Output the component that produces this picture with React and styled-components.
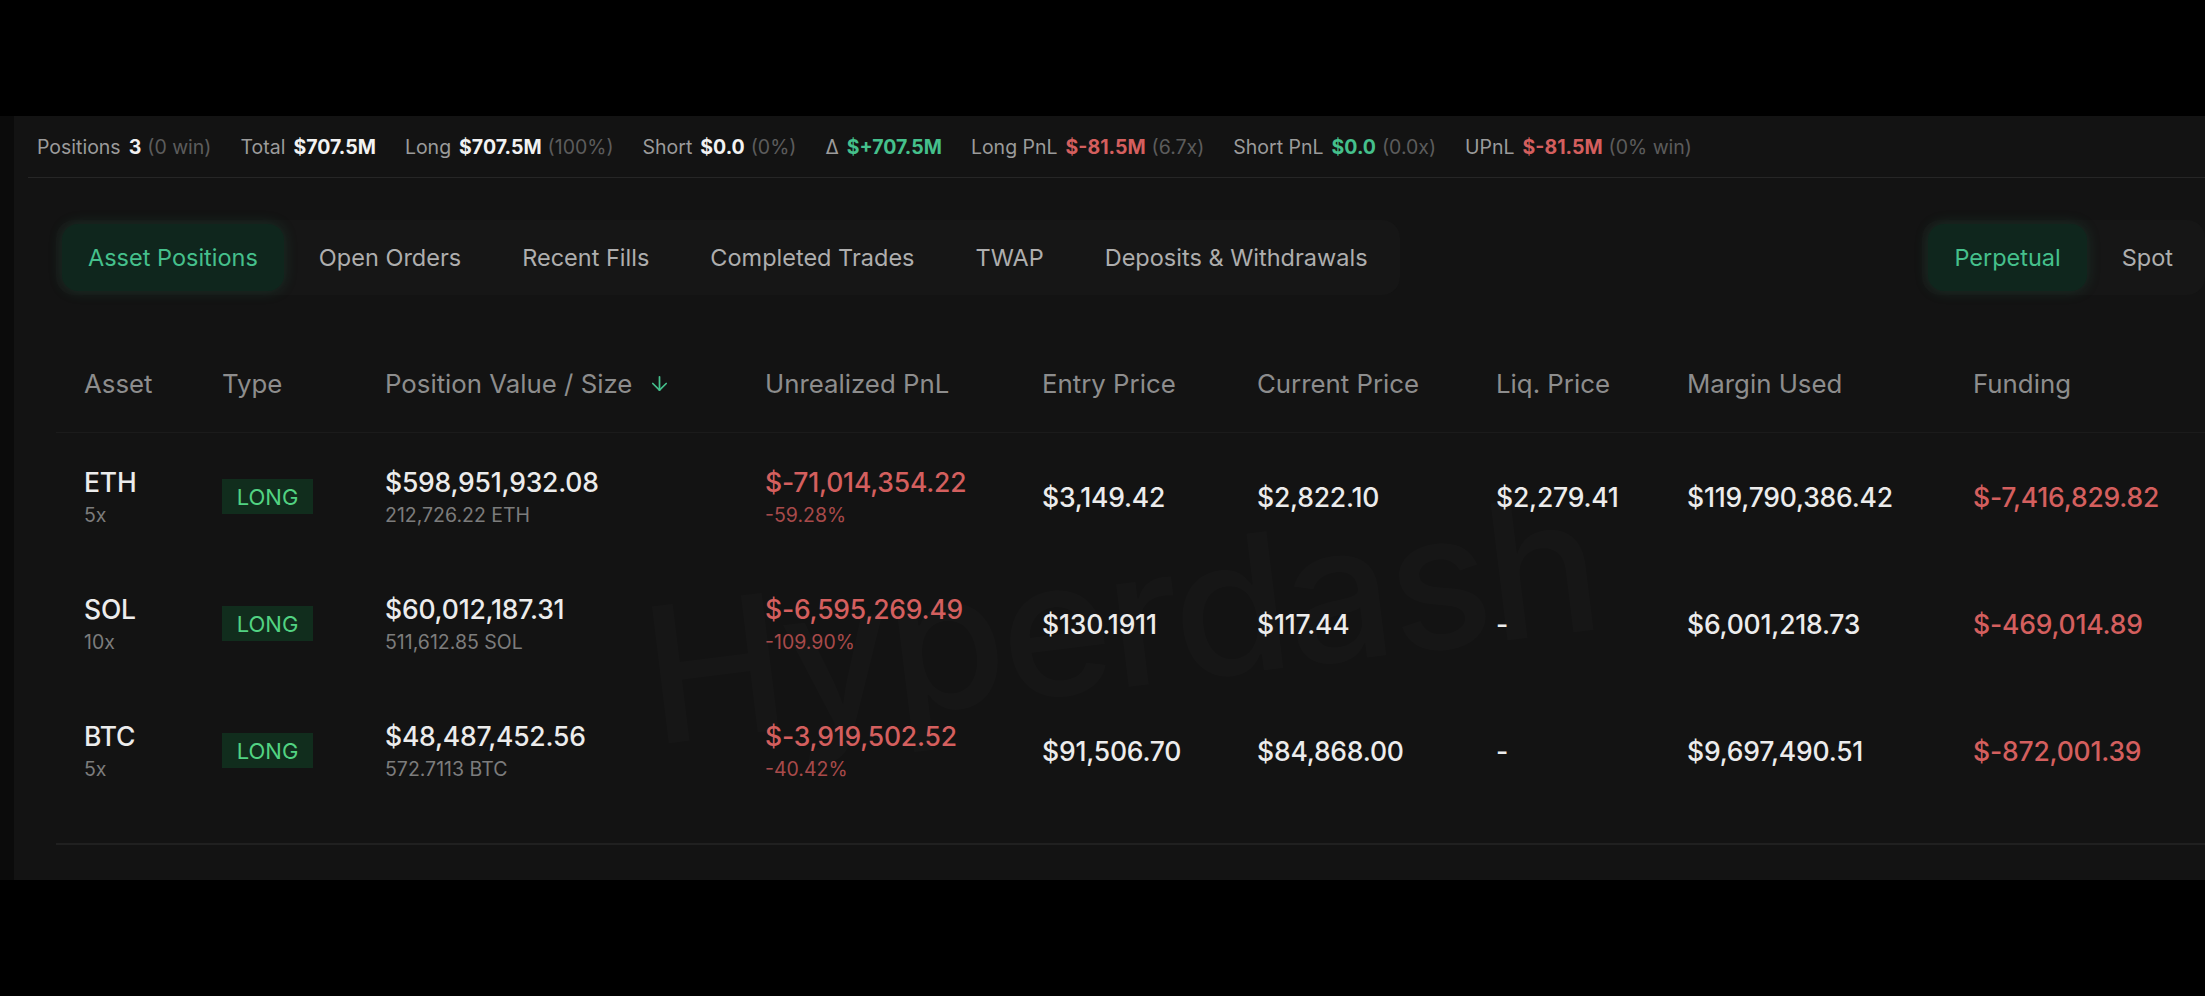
import React from "react"
import styled, { createGlobalStyle } from "styled-components"
import { ArrowDown } from "lucide-react"

const GREEN = "#45c08c"
const RED = "#d45f5e"

const Global = createGlobalStyle`
  html, body {
    margin: 0;
    padding: 0;
    background: #000;
  }
  body {
    font-family: Inter, "Noto Sans", "Liberation Sans", sans-serif;
    -webkit-font-smoothing: antialiased;
  }
`

const Page = styled.div`
  width: 2205px;
  height: 996px;
  padding-top: 116px;
  box-sizing: border-box;
  background: #000;
  overflow: hidden;
`

const Panel = styled.div`
  position: relative;
  height: 764px;
  background: #131313;
  border-left: 14px solid #0b0b0b;
  display: flex;
  flex-direction: column;
  overflow: hidden;
`

const StatsBar = styled.div`
  margin-left: 14px;
  height: 61px;
  padding-left: 9px;
  border-bottom: 1px solid #262626;
  display: flex;
  align-items: center;
  gap: 29px;
  font-size: 19.5px;
  white-space: nowrap;
`

const Stat = styled.div`
  display: flex;
  align-items: baseline;
  gap: 8px;
`

const StatLabel = styled.span`
  color: #9b9b9b;
`

const StatValue = styled.span`
  font-weight: 700;
  color: ${p => (p.$tone === "green" ? GREEN : p.$tone === "red" ? RED : "#f2f2f2")};
`

const StatNote = styled.span`
  color: #5c5c5c;
  margin-left: -2px;
`

const Content = styled.div`
  position: relative;
  z-index: 1;
  padding-left: 42px;
  display: flex;
  flex-direction: column;
`

const TabsRow = styled.div`
  margin-top: 42px;
  display: flex;
  justify-content: space-between;
  align-items: center;
`

const TabGroup = styled.div`
  display: flex;
  gap: 9px;
  padding: 4px 6px;
  background: #161616;
  border-radius: 18px;
`

const Tab = styled.div`
  height: 67px;
  padding: 0 26px;
  display: flex;
  align-items: center;
  border-radius: 16px;
  font-size: 23.5px;
  white-space: nowrap;
  color: ${p => (p.$active ? GREEN : "#aeaeae")};
  background: ${p => (p.$active ? "#0f261d" : "transparent")};
  box-shadow: ${p => (p.$active ? "0 0 14px rgba(40, 140, 95, 0.22)" : "none")};
`

const COLS = "138px 163px 380px 277px 215px 239px 191px 286px 1fr"

const HeaderRow = styled.div`
  margin-top: 39px;
  height: 98px;
  padding-left: 28px;
  display: grid;
  grid-template-columns: ${COLS};
  align-items: center;
  border-bottom: 1px solid #1b1b1b;
`

const HeadCell = styled.div`
  display: flex;
  align-items: center;
  gap: 16px;
  color: #8d8d8d;
  font-size: 25.8px;
  white-space: nowrap;
`

const Row = styled.div`
  height: 127px;
  padding-left: 28px;
  display: grid;
  grid-template-columns: ${COLS};
  align-items: center;
`

const Cell = styled.div`
  display: flex;
  flex-direction: column;
  gap: 5px;
  white-space: nowrap;
`

const Main = styled.span`
  font-size: 26.5px;
  line-height: 32px;
  letter-spacing: -0.2px;
  font-weight: 500;
  color: ${p => (p.$red ? RED : "#ececec")};
`

const Sub = styled.span`
  font-size: 19.5px;
  line-height: 24px;
  color: ${p => (p.$red ? "#a84a4a" : "#7c7c7c")};
`

const Badge = styled.span`
  align-self: flex-start;
  height: 35px;
  width: 91px;
  box-sizing: border-box;
  display: flex;
  align-items: center;
  justify-content: center;
  background: #112d1d;
  color: #52d282;
  font-size: 22px;
`

const BottomLine = styled.div`
  margin-top: 29px;
  height: 2px;
  background: #202020;
`

const Watermark = styled.div`
  position: absolute;
  z-index: 0;
  left: 645px;
  top: 445px;
  font-size: 190px;
  font-weight: 500;
  letter-spacing: -4px;
  color: rgba(255, 255, 255, 0.014);
  transform: rotate(-7deg);
  transform-origin: left bottom;
  pointer-events: none;
  white-space: nowrap;
`

const stats = [
  { label: "Positions", value: "3", note: "(0 win)" },
  { label: "Total", value: "$707.5M" },
  { label: "Long", value: "$707.5M", note: "(100%)" },
  { label: "Short", value: "$0.0", note: "(0%)" },
  { label: "Δ", value: "$+707.5M", tone: "green" },
  { label: "Long PnL", value: "$-81.5M", tone: "red", note: "(6.7x)" },
  { label: "Short PnL", value: "$0.0", tone: "green", note: "(0.0x)" },
  { label: "UPnL", value: "$-81.5M", tone: "red", note: "(0% win)" },
]

const tabs = ["Asset Positions", "Open Orders", "Recent Fills", "Completed Trades", "TWAP", "Deposits & Withdrawals"]

const headers = ["Asset", "Type", "Position Value / Size", "Unrealized PnL", "Entry Price", "Current Price", "Liq. Price", "Margin Used", "Funding"]

const positions = [
  {
    asset: "ETH", lev: "5x", value: "$598,951,932.08", size: "212,726.22 ETH",
    pnl: "$-71,014,354.22", pnlPct: "-59.28%", entry: "$3,149.42", current: "$2,822.10",
    liq: "$2,279.41", margin: "$119,790,386.42", funding: "$-7,416,829.82",
  },
  {
    asset: "SOL", lev: "10x", value: "$60,012,187.31", size: "511,612.85 SOL",
    pnl: "$-6,595,269.49", pnlPct: "-109.90%", entry: "$130.1911", current: "$117.44",
    liq: "-", margin: "$6,001,218.73", funding: "$-469,014.89",
  },
  {
    asset: "BTC", lev: "5x", value: "$48,487,452.56", size: "572.7113 BTC",
    pnl: "$-3,919,502.52", pnlPct: "-40.42%", entry: "$91,506.70", current: "$84,868.00",
    liq: "-", margin: "$9,697,490.51", funding: "$-872,001.39",
  },
]

export default function App() {
  return (
    <Page>
      <Global />
      <Panel>
        <StatsBar>
          {stats.map(s => (
            <Stat key={s.label}>
              <StatLabel>{s.label}</StatLabel>
              <StatValue $tone={s.tone}>{s.value}</StatValue>
              {s.note && <StatNote>{s.note}</StatNote>}
            </Stat>
          ))}
        </StatsBar>

        <Content>
          <TabsRow>
            <TabGroup>
              {tabs.map((t, i) => (
                <Tab key={t} $active={i === 0}>{t}</Tab>
              ))}
            </TabGroup>
            <TabGroup>
              <Tab $active>Perpetual</Tab>
              <Tab>Spot</Tab>
            </TabGroup>
          </TabsRow>

          <HeaderRow>
            {headers.map(h => (
              <HeadCell key={h}>
                {h}
                {h === "Position Value / Size" && <ArrowDown size={23} color={GREEN} strokeWidth={1.8} />}
              </HeadCell>
            ))}
          </HeaderRow>

          {positions.map(p => (
            <Row key={p.asset}>
              <Cell>
                <Main>{p.asset}</Main>
                <Sub>{p.lev}</Sub>
              </Cell>
              <Cell>
                <Badge>LONG</Badge>
              </Cell>
              <Cell>
                <Main>{p.value}</Main>
                <Sub>{p.size}</Sub>
              </Cell>
              <Cell>
                <Main $red>{p.pnl}</Main>
                <Sub $red>{p.pnlPct}</Sub>
              </Cell>
              <Cell><Main>{p.entry}</Main></Cell>
              <Cell><Main>{p.current}</Main></Cell>
              <Cell><Main>{p.liq}</Main></Cell>
              <Cell><Main>{p.margin}</Main></Cell>
              <Cell><Main $red>{p.funding}</Main></Cell>
            </Row>
          ))}

          <BottomLine />
        </Content>

        <Watermark>Hyperdash</Watermark>
      </Panel>
    </Page>
  )
}
